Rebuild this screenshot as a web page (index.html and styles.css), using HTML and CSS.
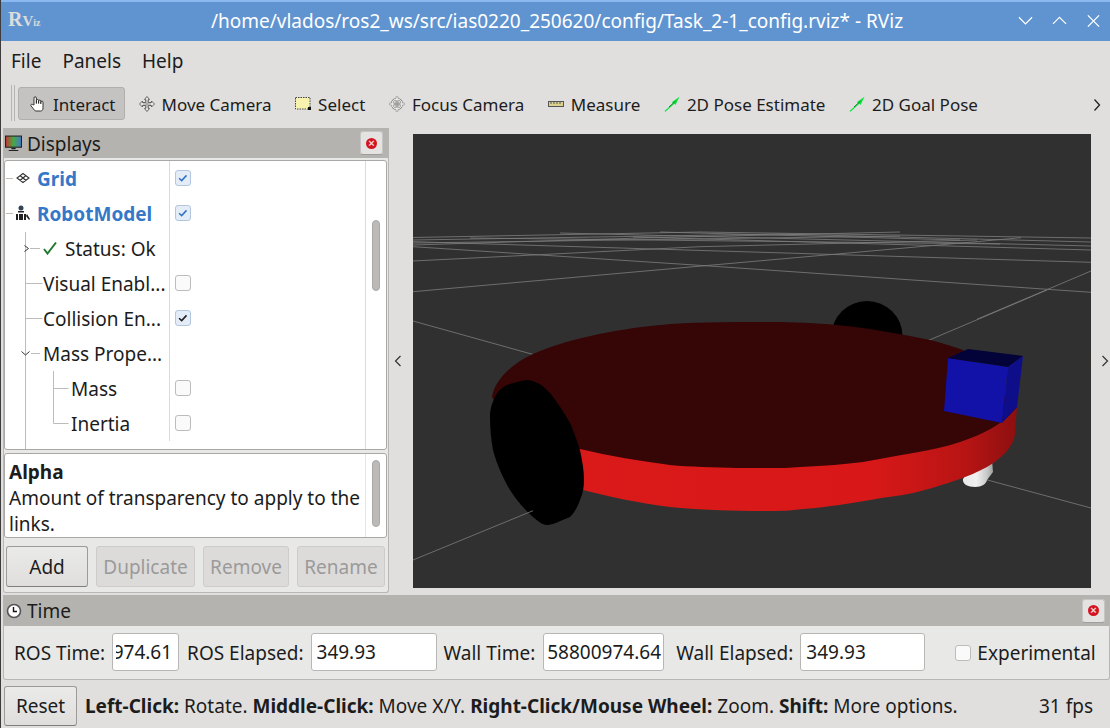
FILE: index.html
```html
<!DOCTYPE html>
<html lang="en">
<head>
<meta charset="utf-8">
<title>RViz</title>
<link rel="stylesheet" href="styles.css">
</head>
<body>
<div class="window">
  <header class="titlebar">
    <div class="logo"><span class="logo-r">R</span><span class="logo-v">V</span><span class="logo-iz">iz</span></div>
    <div class="title">/home/vlados/ros2_ws/src/ias0220_250620/config/Task_2-1_config.rviz* - RViz</div>
    <div class="winbtns">
      <svg class="winbtn" viewBox="0 0 16 12"><path d="M1 2l7 7 7-7"/></svg>
      <svg class="winbtn" viewBox="0 0 16 12"><path d="M1 9l7-7 7 7"/></svg>
      <svg class="winbtn" viewBox="0 0 16 12"><path d="M2 0l12 12M14 0L2 12"/></svg>
    </div>
  </header>

  <nav class="menubar"><span>File</span><span>Panels</span><span>Help</span></nav>

  <div class="toolbar">
    <div class="grip"></div>
    <div class="tool active">
      <svg class="ico" viewBox="0 0 16 16"><path d="M4 9V2a1.200 1.200 0 0 1 2.400 0V7.500 4.600a1.100 1.100 0 0 1 2.200 0V7.500 5.200a1.100 1.100 0 0 1 2.200 0V7.800 6.200a1.100 1.100 0 0 1 2.200 0V12c0 2-1 3-2.500 3H6C4.500 15 4 13.500 3 12.300L1 9.800c-.8-1 .8-2.200 1.600-1.200z" fill="#fff" stroke="#222" stroke-width=".9"/></svg>
      <span>Interact</span>
    </div>
    <div class="tool">
      <svg class="ico" viewBox="0 0 16 16"><path d="M8 .5l2.500 3H9.300V6.500h3.200V5l3 3-3 3V9.500H9.300V12.500h1.200L8 15.500l-2.500-3h1.200V9.500H3.500V11l-3-3 3-3v1.500h3.200V3.500H5.500z" fill="#e8e8e8" stroke="#555" stroke-width=".9"/><path d="M4 8h8M8 4v8" stroke="#888" stroke-width=".9"/></svg>
      <span>Move Camera</span>
    </div>
    <div class="tool">
      <svg class="ico" viewBox="0 0 16 16"><rect x=".5" y="1.500" width="14.500" height="11.500" fill="#f7f3ae" stroke="#444" stroke-dasharray="1.500 1"/><rect x="13" y="11" width="3" height="3" fill="#111"/></svg>
      <span>Select</span>
    </div>
    <div class="tool">
      <svg class="ico" viewBox="0 0 16 16"><path d="M8 .5v15M.5 8h15" stroke="#8a8a8a" stroke-width="2.600"/><circle cx="8" cy="8" r="5" fill="none" stroke="#8a8a8a" stroke-width="2.400"/><path d="M8 1v14M1 8h14" stroke="#fff" stroke-width="1"/><circle cx="8" cy="8" r="5" fill="none" stroke="#fff" stroke-width="1"/><path d="M8 5v6M5 8h6" stroke="#777" stroke-width=".8"/></svg>
      <span>Focus Camera</span>
    </div>
    <div class="tool">
      <svg class="ico" viewBox="0 0 16 16"><rect x=".5" y="5.500" width="15" height="5" fill="#dcd08e" stroke="#555"/><path d="M3 6v2M6 6v2M9 6v2M12 6v2" stroke="#555"/></svg>
      <span>Measure</span>
    </div>
    <div class="tool">
      <svg class="ico" viewBox="0 0 16 16"><path d="M.5 15L9 7.500 8 6 15.500 .8 11.500 9 10.300 7.800 1.500 15.800z" fill="#0be43d"/><path d="M5 11L11.500 5.200" stroke="#0a8a2a" stroke-width="1"/></svg>
      <span>2D Pose Estimate</span>
    </div>
    <div class="tool">
      <svg class="ico" viewBox="0 0 16 16"><path d="M.5 15L9 7.500 8 6 15.500 .8 11.500 9 10.300 7.800 1.500 15.800z" fill="#0be43d"/><path d="M5 11L11.500 5.200" stroke="#0a8a2a" stroke-width="1"/></svg>
      <span>2D Goal Pose</span>
    </div>
    <svg class="more" viewBox="0 0 8 14"><path d="M1.500 1.500l5 5.500-5 5.500"/></svg>
  </div>

  <main class="main">
    <section class="dock">
      <div class="dock-title">
        <svg class="dock-ico" viewBox="0 0 16 16">
          <defs><linearGradient id="scr" x1="0" x2="1" y1="0" y2="0"><stop offset="0" stop-color="#c33"/><stop offset=".5" stop-color="#4a4"/><stop offset="1" stop-color="#47c"/></linearGradient></defs>
          <rect x=".5" y="1" width="15" height="10.500" fill="url(#scr)" stroke="#222"/><path d="M6 12h4v1.500H6zM3.500 14h9v1h-9z" fill="#222"/>
        </svg>
        <span class="dock-name">Displays</span>
        <button class="close"><span class="close-dot">×</span></button>
      </div>
      <div class="dock-body">
        <div class="tree">
          <svg class="guides" viewBox="0 0 361 289">
            <path d="M1 17.500h7M1 52.500h7M20.500 71V289M25 87.500h10M20.500 122.500h17M20.500 157.500h17M26 192.500h9M48.500 210v52.500h15M48.500 227.500h15"/>
            <path class="arrow" d="M19.500 84.500l4 3-4 3M16.500 190.500l4 3.500 4-3.500"/>
          </svg>
          <div class="rows">
            <div class="row">
              <div class="name lv0"><svg class="tico" viewBox="0 0 16 16"><path d="M8 3.500L14 8l-6 4.500L2 8zM5 5.500L11 10.500M11 5.500L5 10.500" fill="none" stroke="#333" stroke-width="1.100"/></svg><b class="blue">Grid</b></div>
              <div class="val"><span class="chk on"><svg viewBox="0 0 16 16"><path d="M3.500 8.200l3 2.800 5.500-6"/></svg></span></div>
            </div>
            <div class="row">
              <div class="name lv0"><svg class="tico" viewBox="0 0 16 16"><circle cx="6" cy="3" r="2.500" fill="#345"/><path d="M3 6h6v1.500H3zM1 9h2v6H1zM4 9h4v6H4zM9 9h2v6H9zM12 9l3 5-1 1-3-4z" fill="#222"/></svg><b class="blue">RobotModel</b></div>
              <div class="val"><span class="chk on"><svg viewBox="0 0 16 16"><path d="M3.500 8.200l3 2.800 5.500-6"/></svg></span></div>
            </div>
            <div class="row">
              <div class="name lv-st"><svg class="okico" viewBox="0 0 14 14"><path d="M1 8l3.500 4.500L13 1.500"/></svg><span>Status: Ok</span></div>
              <div class="val"></div>
            </div>
            <div class="row">
              <div class="name lv1"><span>Visual Enabl...</span></div>
              <div class="val"><span class="chk"></span></div>
            </div>
            <div class="row">
              <div class="name lv1"><span>Collision En...</span></div>
              <div class="val"><span class="chk on dark"><svg viewBox="0 0 16 16"><path d="M3.500 8.200l3 2.800 5.500-6"/></svg></span></div>
            </div>
            <div class="row">
              <div class="name lv1"><span>Mass Prope...</span></div>
              <div class="val"></div>
            </div>
            <div class="row">
              <div class="name lv2"><span>Mass</span></div>
              <div class="val"><span class="chk"></span></div>
            </div>
            <div class="row">
              <div class="name lv2"><span>Inertia</span></div>
              <div class="val"><span class="chk"></span></div>
            </div>
          </div>
          <div class="tree-sb"><div class="thumb thumb-tree"></div></div>
        </div>
        <div class="desc">
          <div class="desc-text"><b>Alpha</b><br>Amount of transparency to apply to the links.</div>
          <div class="desc-sb"><div class="thumb thumb-desc"></div></div>
        </div>
        <div class="btnrow">
          <button class="btn btn-add">Add</button>
          <button class="btn off btn-dup">Duplicate</button>
          <button class="btn off btn-rem">Remove</button>
          <button class="btn off btn-ren">Rename</button>
        </div>
      </div>
    </section>

    <svg class="split split-l" viewBox="0 0 8 12"><path d="M6.500 1L1.500 6l5 5"/></svg>

    <svg class="scene" viewBox="413 134 678 454">
      <defs>
        <linearGradient id="band" x1="492" x2="1018" y1="0" y2="0" gradientUnits="userSpaceOnUse">
          <stop offset="0" stop-color="#c41717"/><stop offset=".18" stop-color="#da1919"/><stop offset=".72" stop-color="#d81818"/><stop offset=".9" stop-color="#b81414"/><stop offset="1" stop-color="#8c0f0f"/>
        </linearGradient>
        <linearGradient id="cast" x1="0" x2="1" y1="0" y2="0"><stop offset="0" stop-color="#e8e8e8"/><stop offset=".45" stop-color="#f0f0f0"/><stop offset=".8" stop-color="#c8c8c8"/><stop offset="1" stop-color="#a0a0a0"/></linearGradient>
      </defs>
      <rect x="413" y="134" width="678" height="454" fill="#303030"/>
      <g class="grid">
        <path d="M413 291.700L705 265.700 1021 237.700"/>
        <path d="M413 246.700L705 265.700 1091 292.300"/>
        <path d="M413 261L700 246.700 977 240"/>
        <path d="M413 241.700L1091 262.300"/>
        <path d="M633 237L1091 250"/>
        <path d="M413 237.500L700 232 1091 238"/>
        <path d="M413 240L780 234 1091 242"/>
        <path d="M413 245L640 238 900 232"/>
        <path d="M470 238L1000 244"/>
        <path d="M560 233L1091 246"/>
        <path d="M413 243L900 236"/>
        <path d="M660 232L960 240"/>
        <path d="M977 319.300L1091 271"/>
        <path d="M413 321L535 355"/>
        <path d="M920 344L1047 290"/>
        <path d="M980 478L1091 508"/>
      </g>
      <ellipse cx="867" cy="336" rx="35.500" ry="35" fill="#000"/>
      <path d="M963 479C962 484 968 487 975 487 982 487 986 484 987 480L993 472 992 460 975 460z" fill="url(#cast)"/>
      <path d="M492 397L583 490C610 497 640 503 670 507 700 510 730 511 770 511 785 511 795 510 803 509 830 507 850 503 870 500 885 497 900 496 913 493 930 489 945 484 957 480 968 476 978 472 987 467 997 461 1004 455 1010 447 1013 442 1015 438 1015 433L1017 407 800 400z" fill="url(#band)"/>
      <path d="M492 397C495 378 515 362 533 354 565 340 610 330 660 325 690 322 730 322 770 322 795 322 815 323 837 325 870 328 900 334 930 340 942 343 952 346 963 350L1017 407C1012 413 1007 418 1000 423 988 431 975 437 960 442 945 447 930 450 913 453 895 456 880 459 863 462 845 464 825 466 800 467 790 468 780 468 770 468 760 468 750 468 737 468 715 467 690 467 670 465 640 461 610 456 580 449 550 440 505 420 492 397z" fill="#360505"/>
      <path d="M527 380C520 381 513 383 507 385 501 388 497 392 495 397 491 405 490 411 490 417 490 428 491 439 493 450 497 465 503 478 510 490 517 501 525 510 533 517 538 521 542 525 547 525 553 525 562 520 570 517 575 512 578 506 580 500 583 493 584 487 584 480 584 470 582 460 580 450 577 441 574 432 570 423 564 412 557 402 550 393 545 388 541 384 537 383 534 381 530 380 527 380z" fill="#000"/>
      <path d="M948 358L1008 367 1002 423 944 411z" fill="#1212a8"/>
      <path d="M948 358L968 349 1023 356 1008 367z" fill="#03033a"/>
      <path d="M1008 367L1023 356 1017 407 1002 423z" fill="#0e0e8a"/>
      <path class="grid" d="M533 510.700L413 560"/>
    </svg>

    <svg class="split split-r" viewBox="0 0 8 12"><path d="M1.500 1l5 5-5 5"/></svg>
  </main>

  <section class="time">
    <div class="time-title">
      <svg class="clock" viewBox="0 0 16 16"><circle cx="8" cy="8" r="6.500" fill="#fff" stroke="#555" stroke-width="1.600"/><path d="M7.500 4v4.500H11" fill="none" stroke="#111" stroke-width="1.400"/></svg>
      <span class="dock-name">Time</span>
      <button class="close"><span class="close-dot">×</span></button>
    </div>
    <div class="time-body">
      <label class="lbl">ROS Time:</label>
      <div class="field f-ros"><div class="clip"><span>974.61</span></div></div>
      <label class="lbl">ROS Elapsed:</label>
      <div class="field f-el"><div class="clip"><span>349.93</span></div></div>
      <label class="lbl">Wall Time:</label>
      <div class="field f-wall"><div class="clip"><span>58800974.64</span></div></div>
      <label class="lbl l-wel">Wall Elapsed:</label>
      <div class="field f-wel"><div class="clip"><span>349.93</span></div></div>
      <span class="chk chk-exp"></span>
      <label class="lbl">Experimental</label>
    </div>
  </section>

  <footer class="status">
    <button class="btn btn-reset">Reset</button>
    <div class="hint"><b>Left-Click:</b> Rotate. <b>Middle-Click:</b> Move X/Y. <b>Right-Click/Mouse Wheel:</b> Zoom. <b>Shift:</b> More options.</div>
    <div class="fps">31 fps</div>
  </footer>
</div>
</body>
</html>
```
FILE: styles.css
```css
* { box-sizing: border-box; }
html, body { margin: 0; padding: 0; }
body {
  width: 1110px; height: 728px; overflow: hidden;
  font-family: "Noto Sans", sans-serif; font-size: 19px; color: #1c1c1c;
  background: #e0dfdd;
}
.window { display: flex; flex-direction: column; height: 728px; border-left: 1px solid #3c3c3c; }
button { font: inherit; margin: 0; }
b { font-weight: 700; }

.titlebar {
  height: 41px; flex: none; display: flex; align-items: center; position: relative;
  background: #5f94d0; border-top: 2px solid #8ab8f0; color: #fff;
}
.logo { width: 34px; margin-left: 7px; font-family: "Liberation Serif", serif; font-weight: 700; color: #dcdcdc; display: flex; align-items: baseline; margin-top: -4px; }
.logo-r { font-size: 20px; }
.logo-v { font-size: 15px; }
.logo-iz { font-size: 10px; }
.title { position: absolute; left: 0; right: 0; text-align: center; font-size: 19px; padding-left: 3px; margin-top: -2px; }
.winbtns { margin-left: auto; display: flex; gap: 19px; margin-right: 9px; margin-top: -1px; position: relative; }
.winbtn { width: 15px; height: 12px; fill: none; stroke: #fff; stroke-width: 1.300; }

.menubar { height: 40px; flex: none; display: flex; align-items: center; gap: 21px; padding-left: 10px; }

.toolbar { height: 47px; flex: none; display: flex; align-items: center; padding: 0 0 3px 10px; font-size: 17px; position: relative; }
.grip { width: 4px; height: 36px; border-left: 1px solid #b5b5b3; border-right: 1px solid #b5b5b3; margin-right: 3px; flex: none; }
.tool { display: flex; align-items: center; height: 33px; padding: 2px 8px 0 11px; gap: 7px; margin-right: 2.600px; border: 1px solid transparent; border-radius: 3px; }
.tool.active { background: #c4c3c1; border-color: #b0afad; margin-right: 2px; }
.ico { width: 16px; height: 16px; flex: none; }
.more { position: absolute; right: 9px; top: 17px; width: 8px; height: 14px; fill: none; stroke: #222; stroke-width: 1.300; }

.main { height: 467px; flex: none; display: flex; align-items: flex-start; position: relative; }
.dock { width: 386px; margin-left: 2px; height: 465px; display: flex; flex-direction: column; flex: none; }
.dock-title { height: 30px; flex: none; display: flex; align-items: center; background: #b5b3b0; padding-left: 2px; padding-right: 6px; }
.dock-title .dock-name { margin-top: 2px; }
.dock-ico { width: 17px; height: 17px; margin-right: 5px; flex: none; }
.dock-name { font-size: 19px; }
.close {
  margin-left: auto; width: 23px; height: 24px; padding: 0; display: flex; align-items: center; justify-content: center;
  background: #e4e3e1; border: 1px solid #c6c5c3; border-bottom-color: #9e9d9b; border-radius: 3px;
}
.close-dot {
  width: 11px; height: 11px; border-radius: 50%; background: #d3151f; color: #f7d6d6;
  font: 700 11px/11px "Liberation Sans", sans-serif; text-align: center; display: block;
}
.dock-body {
  flex: 1; display: flex; flex-direction: column; background: #e8e8e6;
  border: 1px solid #b8b7b5; border-top: 0; border-radius: 0 0 3px 3px; padding: 2px 1px 0 0;
}
.tree {
  height: 290px; flex: none; display: flex; background: #fff; position: relative;
  border: 1px solid #a9a8a6; border-radius: 3px; overflow: hidden;
}
.guides { position: absolute; left: 0; top: 0; width: 361px; height: 289px; fill: none; stroke: #bdbcba; stroke-width: 1; pointer-events: none; }
.guides .arrow { stroke: #333; }
.rows { width: 360px; flex: none; }
.row { height: 35px; display: flex; }
.name { width: 165px; flex: none; display: flex; align-items: center; border-right: 1px solid #dcdbd9; white-space: nowrap; }
.lv0 { padding-left: 10px; }
.lv-st { padding-left: 38px; }
.lv1 { padding-left: 38px; }
.lv2 { padding-left: 66px; }
.tico { width: 16px; height: 16px; margin-right: 6px; flex: none; margin-top: -1px; }
.okico { width: 14px; height: 14px; margin-right: 8px; fill: none; stroke: #1f7a2e; stroke-width: 2; flex: none; margin-top: -2px; }
.blue { color: #3578c8; }
.val { flex: 1; display: flex; align-items: center; padding: 0 0 2px 5px; }
.chk {
  width: 16px; height: 16px; flex: none; display: block; border: 1px solid #bdbcba; border-radius: 3px; background: #fafafa;
}
.chk svg { display: block; width: 14px; height: 14px; fill: none; stroke: #2f74c6; stroke-width: 1.700; }
.chk.on { background: #e4ecf7; border-color: #b3c6df; }
.chk.dark svg { stroke: #1c1c1c; }
.tree-sb { flex: 1; border-left: 1px solid #dcdbd9; position: relative; padding-left: 6px; }
.thumb { width: 8px; background: #bbbab8; border: 1px solid #a9a8a6; border-radius: 4px; }
.thumb-tree { height: 71px; margin-top: 59px; }
.desc {
  height: 85px; flex: none; margin-top: 3px; display: flex; background: #fff;
  border: 1px solid #a9a8a6; border-radius: 3px;
}
.desc-text { width: 360px; padding: 5px 4px; line-height: 26px; flex: none; }
.desc-sb { flex: 1; border-left: 1px solid #e6e5e3; padding-left: 6px; }
.thumb-desc { height: 67px; margin-top: 6px; }
.btnrow { display: flex; margin-top: 8px; padding-left: 2px; }
.btn {
  height: 41px; padding: 0; color: #1c1c1c; font-size: 19px;
  background: linear-gradient(#eaeae8, #dfdedc); border: 1px solid #9c9b99; border-bottom-color: #7f7e7c; border-radius: 3px;
}
.btn.off { background: #dddbd9; border-color: #cdccca; color: #9a9a9a; }
.btn-add { width: 82px; margin-right: 8px; }
.btn-dup { width: 99px; margin-right: 8px; }
.btn-rem { width: 86px; margin-right: 8px; }
.btn-ren { width: 88px; }

.split { position: absolute; top: 227px; width: 8px; height: 12px; fill: none; stroke: #333; stroke-width: 1.200; }
.split-l { left: 393px; }
.split-r { left: 1100px; }
.scene { display: block; width: 678px; height: 454px; margin: 6px 0 0 24px; flex: none; }
.grid path, path.grid { fill: none; stroke: #7d7d7d; stroke-width: 1; opacity: .8; }

.time { height: 85px; flex: none; display: flex; flex-direction: column; margin-left: 2px; }
.time-title { height: 31px; flex: none; display: flex; align-items: center; background: #b5b3b0; padding: 0 5px 0 3px; }
.clock { width: 16px; height: 16px; margin-right: 5px; flex: none; }
.time-body {
  height: 54px; flex: none; display: flex; align-items: center; padding: 0 0 0 10px; gap: 7px;
  background: #e8e8e6; border: 1px solid #b8b7b5; border-top: 0; border-radius: 0 0 3px 3px;
}
.lbl { white-space: nowrap; }
.field {
  height: 38px; flex: none; display: flex; align-items: center; background: #fff; margin-top: -1px;
  border: 1px solid #b8b7b5; border-radius: 3px; padding: 0 6px 0 5px;
}
.clip { flex: 1; min-width: 0; overflow: hidden; white-space: nowrap; }
.f-ros { width: 67px; padding-left: 3px; margin-right: 1px; }
.f-ros .clip { display: flex; justify-content: flex-end; }
.f-ros .clip span { flex: none; }
.f-el { width: 126px; }
.f-wall { width: 121px; padding: 0 2px 0 3px; margin-left: 1px; }
.f-wel { width: 125px; }
.l-wel { margin-left: 5px; }
.chk-exp { margin-left: 23px; margin-right: -1px; }

.status { height: 49px; flex: none; display: flex; align-items: center; padding: 2px 0 0 3px; }
.btn-reset { width: 73px; height: 40px; flex: none; }
.hint { margin-left: 8px; white-space: nowrap; }
.fps { margin-left: auto; margin-right: 17px; }
```
